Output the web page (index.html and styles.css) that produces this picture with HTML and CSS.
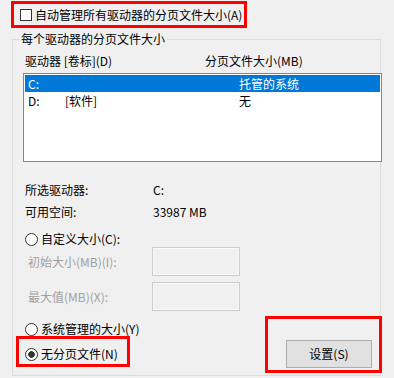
FILE: index.html
```html
<!DOCTYPE html>
<html lang="zh-CN">
<head>
<meta charset="utf-8">
<title>虚拟内存</title>
<link rel="stylesheet" href="styles.css">
</head>
<body>
<div class="page">
  <div class="top-check">
    <span class="checkbox"></span>
    <span class="top-label">自动管理所有驱动器的分页文件大小(A)</span>
  </div>

  <div class="group">
    <div class="legend">每个驱动器的分页文件大小</div>
    <div class="col-head">
      <span class="ch-drive">驱动器 [卷标](D)</span>
      <span>分页文件大小(MB)</span>
    </div>
    <div class="listbox">
      <div class="row selected"><span>C:</span><span></span><span>托管的系统</span></div>
      <div class="row"><span>D:</span><span>[软件]</span><span>无</span></div>
    </div>

    <div class="info">
      <span>所选驱动器:</span><span>C:</span>
      <span>可用空间:</span><span>33987 MB</span>
    </div>

    <div class="radio-row custom">
      <span class="radio"></span><span>自定义大小(C):</span>
    </div>
    <div class="field-row first">
      <span class="field-label">初始大小(MB)(I):</span><span class="field"></span>
    </div>
    <div class="field-row second">
      <span class="field-label">最大值(MB)(X):</span><span class="field"></span>
    </div>

    <div class="radio-row system">
      <span class="radio"></span><span>系统管理的大小(Y)</span>
    </div>
    <div class="bottom-row">
      <div class="radio-inline">
        <span class="radio checked"></span><span>无分页文件(N)</span>
      </div>
      <button class="btn">设置(S)</button>
    </div>
  </div>

  <div class="mark mark-a"></div>
  <div class="mark mark-n"></div>
  <div class="mark mark-s"></div>
</div>
</body>
</html>
```

FILE: styles.css
```css
html, body {
  margin: 0;
  padding: 0;
  background: #f0f0f0;
}

.page {
  position: relative;
  width: 394px;
  height: 378px;
  overflow: hidden;
  font-family: "Noto Sans CJK SC", "Noto Sans", sans-serif;
  font-size: 12px;
  line-height: 16px;
  color: #000;
}

.top-check {
  display: flex;
  align-items: center;
  height: 30px;
  padding-left: 20px;
  gap: 3px;
}

.checkbox {
  width: 12px;
  height: 12px;
  box-sizing: border-box;
  border: 1px solid #333;
  background: #fff;
}

.group {
  margin: 9px 0 0 12px;
  width: 369px;
  box-sizing: border-box;
  border: 1px solid #dcdcdc;
  padding: 0 0 7px 0;
}

.legend {
  width: max-content;
  margin: -9px 0 0 6px;
  padding: 0 2px;
  background: #f0f0f0;
  line-height: 16px;
}

.col-head {
  display: flex;
  margin-top: 6px;
  padding-left: 12px;
}

.ch-drive {
  width: 180px;
}

.listbox {
  margin: 4px 0 0 10px;
  width: 359px;
  height: 89px;
  box-sizing: border-box;
  border: 1px solid #828790;
  background: #fff;
  padding: 1px;
}

.row {
  display: grid;
  grid-template-columns: 37px 174px 1fr;
  height: 17px;
  line-height: 17px;
  padding-left: 3px;
}

.row.selected {
  background: #0078d7;
  color: #fff;
}

.info {
  display: grid;
  grid-template-columns: 128px auto;
  margin-top: 17px;
  padding-left: 12px;
  line-height: 22px;
}

.radio-row {
  display: flex;
  align-items: center;
  gap: 3px;
  height: 16px;
  padding-left: 12px;
}

.radio-row.custom {
  margin-top: 8px;
}

.radio-row.system {
  margin-top: 10px;
}

.radio {
  width: 13px;
  height: 13px;
  box-sizing: border-box;
  border: 1px solid #333;
  border-radius: 50%;
  background: #fff;
  flex: none;
}

.radio.checked {
  background: radial-gradient(circle, #333 0 3px, #fff 3.6px);
}

.field-row {
  display: flex;
  align-items: center;
  padding-left: 15px;
  color: #a0a0a0;
}

.field-row.second {
  margin-top: 6px;
}

.field-label {
  width: 124px;
}

.field {
  width: 88px;
  height: 29px;
  box-sizing: border-box;
  border: 1px solid #cccccc;
  box-shadow: inset 0 0 0 1px #f9f9f9;
  background: #f0f0f0;
}

.bottom-row {
  display: flex;
  align-items: center;
  justify-content: space-between;
  margin-top: 3px;
  height: 28px;
  padding: 0 8px 0 12px;
}

.radio-inline {
  display: flex;
  align-items: center;
  gap: 3px;
}

.btn {
  width: 86px;
  height: 28px;
  box-sizing: border-box;
  border: 1px solid #adadad;
  background: #e1e1e1;
  font: inherit;
  color: #000;
  padding: 0;
}

.mark {
  position: absolute;
  box-sizing: border-box;
  border: 3px solid #ff0000;
}

.mark-a {
  left: 11px;
  top: 1px;
  width: 236px;
  height: 27px;
}

.mark-n {
  left: 16px;
  top: 336px;
  width: 114px;
  height: 31px;
}

.mark-s {
  left: 265px;
  top: 316px;
  width: 117px;
  height: 57px;
}
```
